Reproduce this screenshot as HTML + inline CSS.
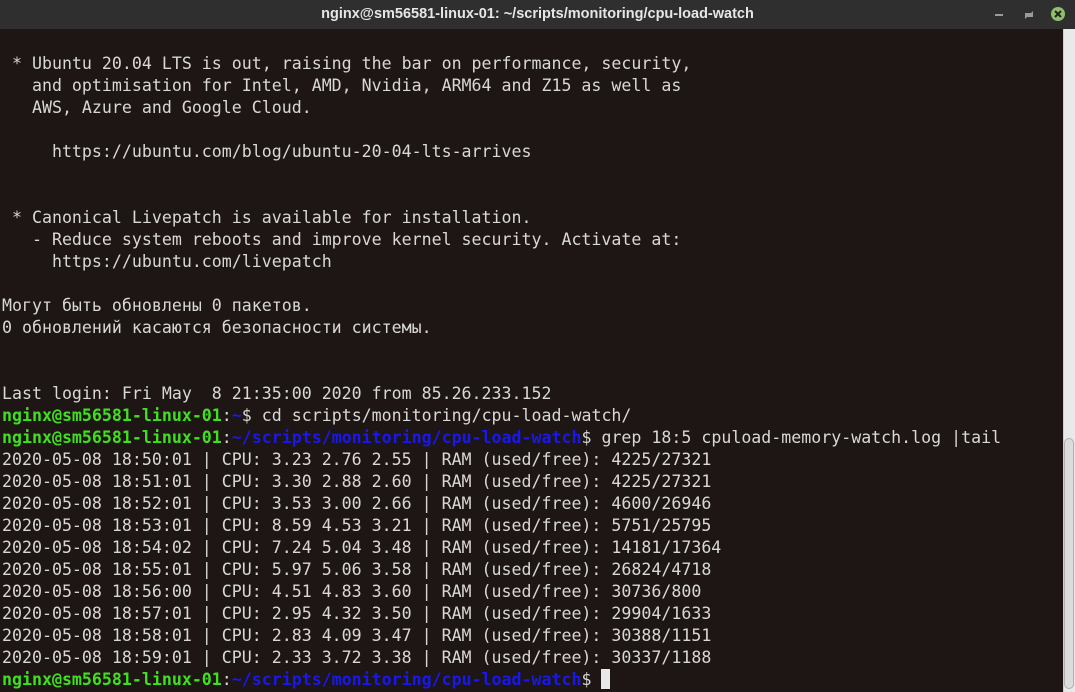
<!DOCTYPE html>
<html><head><meta charset="utf-8"><style>
html,body{margin:0;padding:0;width:1075px;height:692px;overflow:hidden;background:#1e1614;}
.title{position:absolute;left:0;top:0;width:1075px;height:29px;background:#2f2f2f;color:#e6e6e6;font:bold 14.5px "Liberation Sans","DejaVu Sans",sans-serif;text-align:center;line-height:29px;}
.term{position:absolute;left:0;top:29px;width:1063px;height:663px;background:#1e1614;}
pre{position:absolute;left:2px;top:53px;margin:0;font-family:"DejaVu Sans Mono","Liberation Mono",monospace;font-size:16.6px;line-height:22px;color:#d8d8d4;white-space:pre;}
.g{color:#3fe11f;font-weight:bold}
.b{color:#1818ee;font-weight:bold}
.cur{display:inline-block;width:9px;height:20px;background:#e8e8e8;vertical-align:-4px}
.sb{position:absolute;left:1063px;top:29px;width:12px;height:663px;background:#e9e9e9;border-left:1px solid #cfcfcf;box-sizing:border-box}
.th{position:absolute;left:1064px;top:438px;width:10px;height:251px;background:#dcdcdc;border:1px solid #b0b0b0;border-radius:5px;box-sizing:border-box}
</style></head><body>
<div class="title">nginx@sm56581-linux-01: ~/scripts/monitoring/cpu-load-watch</div>
<svg style="position:absolute;left:990px;top:7px" width="80" height="18">
<rect x="5" y="7" width="8" height="2" fill="#9a9a9a"/>
<path d="M35 12 L35 6 L41 6 Z M43 4 L43 10 L37 10 Z" fill="#9a9a9a"/>
<circle cx="68" cy="7" r="7" fill="#8fbf6a"/>
<path d="M65 4 L71 10 M71 4 L65 10" stroke="#222" stroke-width="2"/>
</svg>
<div class="term"></div>
<pre> * Ubuntu 20.04 LTS is out, raising the bar on performance, security,
   and optimisation for Intel, AMD, Nvidia, ARM64 and Z15 as well as
   AWS, Azure and Google Cloud.

     https://ubuntu.com/blog/ubuntu-20-04-lts-arrives


 * Canonical Livepatch is available for installation.
   - Reduce system reboots and improve kernel security. Activate at:
     https://ubuntu.com/livepatch

Могут быть обновлены 0 пакетов.
0 обновлений касаются безопасности системы.


Last login: Fri May  8 21:35:00 2020 from 85.26.233.152
<span class="g">nginx@sm56581-linux-01</span>:<span class="b">~</span>$ cd scripts/monitoring/cpu-load-watch/
<span class="g">nginx@sm56581-linux-01</span>:<span class="b">~/scripts/monitoring/cpu-load-watch</span>$ grep 18:5 cpuload-memory-watch.log |tail
2020-05-08 18:50:01 | CPU: 3.23 2.76 2.55 | RAM (used/free): 4225/27321
2020-05-08 18:51:01 | CPU: 3.30 2.88 2.60 | RAM (used/free): 4225/27321
2020-05-08 18:52:01 | CPU: 3.53 3.00 2.66 | RAM (used/free): 4600/26946
2020-05-08 18:53:01 | CPU: 8.59 4.53 3.21 | RAM (used/free): 5751/25795
2020-05-08 18:54:02 | CPU: 7.24 5.04 3.48 | RAM (used/free): 14181/17364
2020-05-08 18:55:01 | CPU: 5.97 5.06 3.58 | RAM (used/free): 26824/4718
2020-05-08 18:56:00 | CPU: 4.51 4.83 3.60 | RAM (used/free): 30736/800
2020-05-08 18:57:01 | CPU: 2.95 4.32 3.50 | RAM (used/free): 29904/1633
2020-05-08 18:58:01 | CPU: 2.83 4.09 3.47 | RAM (used/free): 30388/1151
2020-05-08 18:59:01 | CPU: 2.33 3.72 3.38 | RAM (used/free): 30337/1188
<span class="g">nginx@sm56581-linux-01</span>:<span class="b">~/scripts/monitoring/cpu-load-watch</span>$ <span class="cur"></span></pre>
<div class="sb"></div><div class="th"></div>
</body></html>
